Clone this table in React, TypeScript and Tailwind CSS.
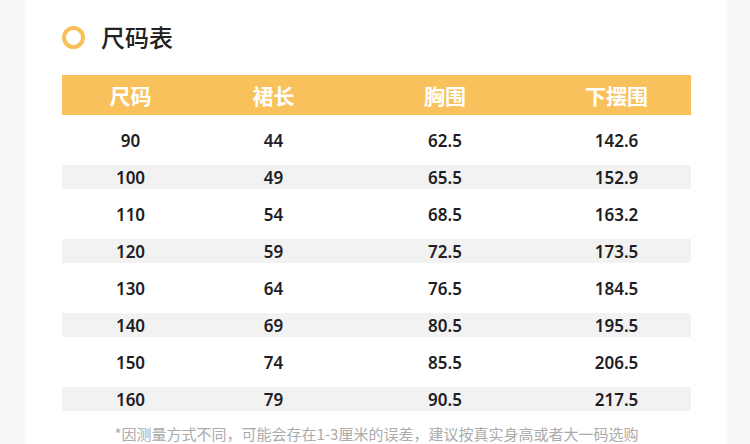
const rows = [
  ['90', '44', '62.5', '142.6'],
  ['100', '49', '65.5', '152.9'],
  ['110', '54', '68.5', '163.2'],
  ['120', '59', '72.5', '173.5'],
  ['130', '64', '76.5', '184.5'],
  ['140', '69', '80.5', '195.5'],
  ['150', '74', '85.5', '206.5'],
  ['160', '79', '90.5', '217.5'],
];

const headers = ['尺码', '裙长', '胸围', '下摆围'];

const cols = 'grid grid-cols-[137px_149px_194px_149px]';
const cjk = "font-['Noto_Sans_CJK_SC','Noto_Sans',sans-serif]";

export default function App() {
  return (
    <div className="w-[750px] h-[444px] overflow-hidden bg-[#f8f8f8] pl-[25px]">
      <div className="w-[702px] h-full bg-white pl-[37px] pt-[22px]">
        {/* title */}
        <div className="flex items-center h-[30px]">
          <span className="w-[23px] h-[23px] rounded-full border-[4px] border-[#f9bf58]" />
          <span className={`${cjk} ml-[16px] text-[24px] leading-none font-medium text-[#222]`}>尺码表</span>
        </div>

        {/* table */}
        <div className="w-[629px] mt-[23px] flex flex-col gap-y-[13px]">
          <div className={`${cols} h-[40px] items-center bg-[#f9c15b]`}>
            {headers.map((h) => (
              <div key={h} className={`${cjk} text-center text-white text-[21px] font-bold leading-none`}>
                {h}
              </div>
            ))}
          </div>
          {rows.map((r, i) => (
            <div
              key={r[0]}
              className={`${cols} h-[24px] items-center ${i % 2 === 1 ? 'bg-[#f2f2f2]' : 'bg-white'}`}
            >
              {r.map((c, j) => (
                <div
                  key={j}
                  className="text-center text-[17px] leading-none font-semibold text-[#1e1e24] font-['Noto_Sans',sans-serif]"
                >
                  {c}
                </div>
              ))}
            </div>
          ))}
        </div>

        <div className={`${cjk} w-[629px] mt-[15px] text-center text-[15px] leading-none text-[#ababab]`}>
          *因测量方式不同，可能会存在1-3厘米的误差，建议按真实身高或者大一码选购
        </div>
      </div>
    </div>
  );
}
